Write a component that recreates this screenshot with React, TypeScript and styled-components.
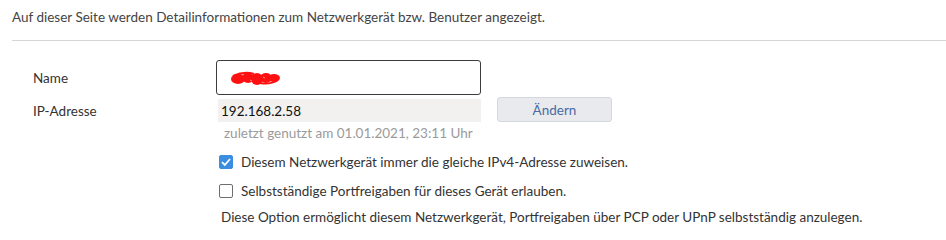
import React from 'react';
import styled, { createGlobalStyle } from 'styled-components';

const GlobalStyle = createGlobalStyle`
  body {
    margin: 0;
    background: #ffffff;
    font-family: Lato, "Noto Sans", sans-serif;
    font-size: 13.5px;
    color: #333333;
  }
`;

const Page = styled.div`
  padding: 8px 0 0 12px;
`;

const Intro = styled.p`
  margin: 0;
  line-height: 18px;
  color: #444;
`;

const Divider = styled.hr`
  margin: 14px 0 0 0;
  border: none;
  border-top: 1px solid #d6d6d6;
`;

const Form = styled.div`
  display: grid;
  grid-template-columns: 183px 1fr;
  padding: 19px 0 0 21px;
  align-items: center;
`;

const Label = styled.div<{ $top?: number }>`
  color: #333;
  margin-top: ${(p) => p.$top ?? 0}px;
`;

const NameInput = styled.div`
  width: 265px;
  height: 35px;
  box-sizing: border-box;
  border: 1px solid #3c3c3c;
  border-radius: 3px;
  display: flex;
  align-items: center;
  padding-left: 13px;
`;

const IpRow = styled.div`
  display: flex;
  align-items: center;
  gap: 16px;
  margin-top: 4px;
  padding-left: 2px;
`;

const IpField = styled.div`
  width: 260px;
  height: 23px;
  background: #f2f1ef;
  display: flex;
  align-items: center;
  padding-left: 3px;
  color: #111;
`;

const Button = styled.button`
  width: 115px;
  height: 25px;
  margin-top: -2px;
  background: #e8eaee;
  border: 1px solid #d4d8de;
  border-radius: 3px;
  color: #4a6aa2;
  font-family: inherit;
  font-size: 13.5px;
  padding: 0;
`;

const Hint = styled.div`
  grid-column: 2;
  color: #9a9a9a;
  padding-left: 8px;
  margin-top: 3px;
`;

const CheckRow = styled.label<{ $top: number }>`
  grid-column: 2;
  display: flex;
  align-items: center;
  gap: 8px;
  padding-left: 3px;
  margin-top: ${(p) => p.$top}px;
  color: #333;
`;

const Box = styled.span<{ $checked?: boolean }>`
  width: 14px;
  height: 14px;
  box-sizing: border-box;
  border-radius: 2px;
  border: 1px solid ${(p) => (p.$checked ? '#3a8ddf' : '#6e6e6e')};
  background: ${(p) => (p.$checked ? '#3a8ddf' : '#fff')};
  display: flex;
  align-items: center;
  justify-content: center;
`;

const Note = styled.div`
  grid-column: 2;
  padding-left: 5px;
  margin-top: 10px;
  color: #333;
`;

const Scribble = () => (
  <svg width="52" height="16" viewBox="0 0 52 16">
    <g fill="#ff1010">
      <ellipse cx="8" cy="9" rx="7" ry="5" />
      <ellipse cx="18" cy="8" rx="6" ry="5" />
      <ellipse cx="27" cy="9" rx="6" ry="6" />
      <ellipse cx="36" cy="8" rx="6" ry="5" />
      <ellipse cx="44" cy="8" rx="6" ry="4" />
    </g>
    <path d="M3 6 Q14 1 24 4 M30 13 Q40 15 48 10" stroke="#ff1010" strokeWidth="2" fill="none" />
    <path d="M20 10 L22 11 M33 7 L35 8" stroke="#ff8080" strokeWidth="1" />
  </svg>
);

const Check = () => (
  <svg width="12" height="12" viewBox="0 0 12 12">
    <path d="M2 6.2 L4.8 9 L10 3" stroke="#fff" strokeWidth="1.8" fill="none" />
  </svg>
);

const App: React.FC = () => (
  <>
    <GlobalStyle />
    <Page>
      <Intro>Auf dieser Seite werden Detailinformationen zum Netzwerkgerät bzw. Benutzer angezeigt.</Intro>
      <Divider />
      <Form>
        <Label>Name</Label>
        <NameInput>
          <Scribble />
        </NameInput>
        <Label $top={4}>IP-Adresse</Label>
        <IpRow>
          <IpField>192.168.2.58</IpField>
          <Button>Ändern</Button>
        </IpRow>
        <Hint>zuletzt genutzt am 01.01.2021, 23:11 Uhr</Hint>
        <CheckRow $top={13}>
          <Box $checked>
            <Check />
          </Box>
          Diesem Netzwerkgerät immer die gleiche IPv4-Adresse zuweisen.
        </CheckRow>
        <CheckRow $top={13}>
          <Box />
          Selbstständige Portfreigaben für dieses Gerät erlauben.
        </CheckRow>
        <Note>Diese Option ermöglicht diesem Netzwerkgerät, Portfreigaben über PCP oder UPnP selbstständig anzulegen.</Note>
      </Form>
    </Page>
  </>
);

export default App;
